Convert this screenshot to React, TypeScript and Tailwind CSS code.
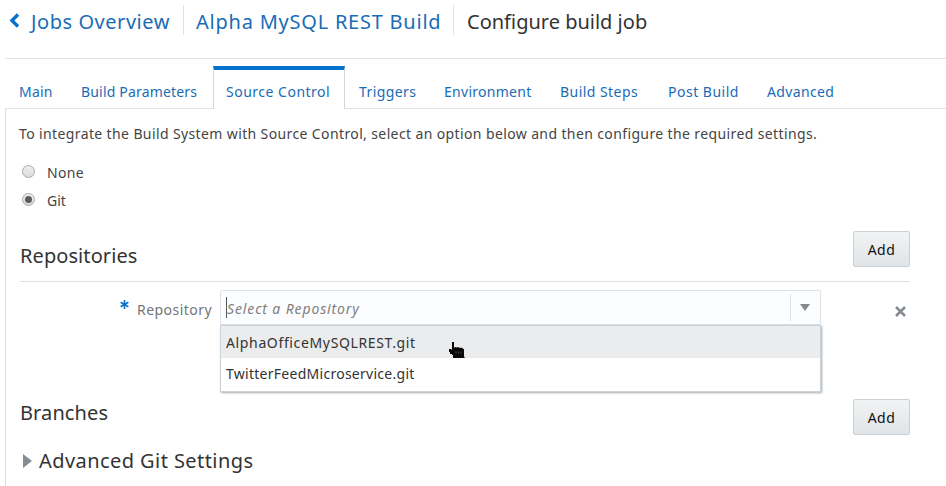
import type { ReactNode } from "react";

const tabs = [
  { label: "Main", cls: "w-[62px] tracking-[0.2px]" },
  { label: "Build Parameters", cls: "w-[146px] tracking-[0.18px]" },
  { label: "Source Control", cls: "w-[132px] tracking-[0.5px]", active: true },
  { label: "Triggers", cls: "w-[85px] tracking-[0.4px]" },
  { label: "Environment", cls: "w-[116px] tracking-[0.28px]" },
  { label: "Build Steps", cls: "w-[108px] tracking-[0.45px]" },
  { label: "Post Build", cls: "w-[99px] tracking-[0.5px]" },
  { label: "Advanced", cls: "w-[94px] tracking-[0.35px]" },
];

function AddButton() {
  return (
    <button className="h-9 w-[57px] shrink-0 rounded-[2px] border border-[#c9d1d8] bg-linear-to-b from-[#f1f3f4] to-[#e1e5e8] text-[14px] tracking-[0.5px] text-[#111]">
      Add
    </button>
  );
}

function Radio({ checked }: { checked?: boolean }) {
  return (
    <span className="flex size-[13px] items-center justify-center rounded-full border border-[#aaa] bg-linear-to-b from-[#eee] to-[#dcdcdc]">
      {checked && <span className="size-[7px] rounded-full bg-[#5c5c5c]" />}
    </span>
  );
}

function Heading({ children }: { children: ReactNode }) {
  return <h2 className="text-[20px] leading-7 text-[#333]">{children}</h2>;
}

export default function App() {
  return (
    <div className="h-[486px] w-[946px] overflow-hidden bg-white font-['Noto_Sans',sans-serif] text-[14px] text-[#444]">
      <header className="ml-[5px] flex h-[59px] border-b border-[#dce4ec] pt-[5px] text-[20px] leading-[33px] text-[#1a6cb5]">
        <svg className="mt-[8px] ml-[3px] h-[15px] w-[12px]" viewBox="0 0 12 15" fill="none">
          <path d="M10 1.500 4 7.500l6 6" stroke="#0572ce" strokeWidth="3.4" />
        </svg>
        <a className="ml-[11px] w-[152px] tracking-[0.55px] whitespace-nowrap">Jobs Overview</a>
        <span className="h-[30px] w-px bg-[#dce4ec]" />
        <a className="ml-[12px] w-[257px] tracking-[0.77px] whitespace-nowrap">Alpha MySQL REST Build</a>
        <span className="h-[30px] w-px bg-[#dce4ec]" />
        <h1 className="ml-[13px] whitespace-nowrap text-[#333]">Configure build job</h1>
      </header>

      <nav className="ml-[5px] flex h-[50px] items-end text-[#1a6cb5]">
        {tabs.map((t) => (
          <a
            key={t.label}
            className={
              "flex items-center whitespace-nowrap " +
              (t.active
                ? "h-[43px] border-x border-t-[4px] border-x-[#ced8e0] border-t-[#0572ce] pt-[4px] pl-[12px] "
                : "h-[42px] border-b border-[#dce4ec] pt-[7px] pl-[14px] ") +
              t.cls
            }
          >
            {t.label}
          </a>
        ))}
        <span className="h-px grow bg-[#dce4ec]" />
      </nav>

      <main className="ml-[5px] h-[377px] border-l border-[#d5dfe8] pl-[14px]">
        <p className="-ml-px pt-[15px] leading-5 tracking-[0.38px] whitespace-nowrap">
          To integrate the Build System with Source Control, select an option below and then configure the required settings.
        </p>
        <label className="mt-[17px] flex h-5 items-center gap-[12px] pl-[2px]">
          <Radio />
          <span className="pt-[2px] tracking-[0.3px]">None</span>
        </label>
        <label className="mt-[8px] flex h-5 items-center gap-[12px] pl-[2px]">
          <Radio checked />
          <span className="pt-[2px]">Git</span>
        </label>

        <section className="mt-[22px] flex h-[51px] w-[890px] items-start justify-between border-b border-[#d9e1e8]">
          <div className="pt-[11px] tracking-[0.08px]"><Heading>Repositories</Heading></div>
          <AddButton />
        </section>

        <div className="mt-[8px] flex h-[110px]">
          <div className="flex h-9 w-[200px] items-center justify-end gap-[8px] pr-[8px] tracking-[0.45px] text-[#757575]">
            <svg className="-mt-[7px] size-[9px]" viewBox="0 0 10 10" stroke="#0572ce" strokeWidth="1.8">
              <path d="M5 0v10M.7 2.500l8.600 5M9.300 2.500l-8.600 5" />
            </svg>
            <span className="pt-[2px]">Repository</span>
          </div>
          <div className="w-[601px]">
            <div className="flex h-[35px] items-center rounded-[2px] border border-[#dce2e8] bg-[#fcfdfe] pl-[5px]">
              <span className="h-[21px] w-px bg-[#555]" />
              <span className="grow pt-[2px] tracking-[0.87px] text-[#808080] italic">Select a Repository</span>
              <span className="h-[27px] w-px bg-[#dce0e4]" />
              <svg className="mr-[10px] ml-[9px] h-[7px] w-[10px]" viewBox="0 0 10 7"><path d="M0 0h10L5 7z" fill="#828a90" /></svg>
            </div>
            <div className="h-[67px] border border-[#cbd3da] bg-white shadow-[1px_1px_2px_rgba(80,90,100,0.5)]">
              <div className="relative h-8 bg-[#ebecee] pl-[5px] leading-[33px] tracking-[0.64px] text-[#333]">
                AlphaOfficeMySQLREST.git
                <svg className="absolute top-[15px] left-[227px] h-[18px] w-[18px]" viewBox="0 0 18 18">
                  <path d="M4 1h2v6l1-1 2 .5 1-.5 2 1 1-.5 2 1 1 1v7l1 1-1 .5H5V14H4v-1H2v-2H1V8h2l1 1z" fill="#080808" />
                  <path d="M8 10.500v2M10.500 10.500v2M13 10.500v2" stroke="#666" strokeWidth=".7" />
                </svg>
              </div>
              <div className="pl-[5px] leading-[32px] tracking-[0.27px] text-[#333]">TwitterFeedMicroservice.git</div>
            </div>
          </div>
          <svg className="mt-[16px] ml-[74px] size-[11px]" viewBox="0 0 11 11"><path d="m1 1 9 9M10 1l-9 9" stroke="#858b90" strokeWidth="2.5" /></svg>
        </div>

        <section className="-mt-px flex w-[890px] items-start justify-between">
          <div className="tracking-[0.1px]"><Heading>Branches</Heading></div>
          <AddButton />
        </section>
        <section className="mt-[12px] flex items-center gap-[7px] pl-[3px] tracking-[0.43px]">
          <svg className="h-[14px] w-[9px]" viewBox="0 0 9 14"><path d="M0 0v14l9-7z" fill="#858d94" /></svg>
          <Heading>Advanced Git Settings</Heading>
        </section>
      </main>
    </div>
  );
}
